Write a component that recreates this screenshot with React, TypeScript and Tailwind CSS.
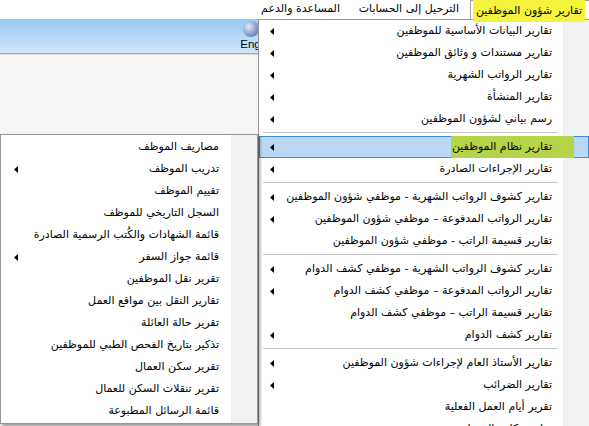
import type { ReactNode } from "react";

type Entry = { label: string; sub?: boolean } | "sep";

const MAIN_MENU: Entry[] = [
  { label: "تقارير البيانات الأساسية للموظفين", sub: true },
  { label: "تقارير مستندات و وثائق الموظفين", sub: true },
  { label: "تقارير الرواتب الشهرية", sub: true },
  { label: "تقارير المنشأة", sub: true },
  { label: "رسم بياني لشؤون الموظفين", sub: true },
  "sep",
  { label: "تقارير نظام الموظفين", sub: true },
  { label: "تقارير الإجراءات الصادرة", sub: true },
  "sep",
  { label: "تقارير كشوف الرواتب الشهرية - موظفي شؤون الموظفين", sub: true },
  { label: "تقارير الرواتب المدفوعة – موظفي شؤون الموظفين", sub: true },
  { label: "تقارير قسيمة الراتب - موظفي شؤون الموظفين" },
  "sep",
  { label: "تقارير كشوف الرواتب الشهرية - موظفي كشف الدوام", sub: true },
  { label: "تقارير الرواتب المدفوعة – موظفي كشف الدوام", sub: true },
  { label: "تقارير قسيمة الراتب – موظفي كشف الدوام" },
  { label: "تقارير كشف الدوام", sub: true },
  "sep",
  { label: "تقارير الأستاذ العام لإجراءات شؤون الموظفين", sub: true },
  { label: "تقارير الضرائب", sub: true },
  { label: "تقرير أيام العمل الفعلية" },
  { label: "تقارير تكلفة الموظفين", sub: true },
];

const SUB_MENU: Entry[] = [
  { label: "مصاريف الموظف" },
  { label: "تدريب الموظف", sub: true },
  { label: "تقييم الموظف" },
  { label: "السجل التاريخي للموظف" },
  { label: "قائمة الشهادات والكُتب الرسمية الصادرة" },
  { label: "قائمة جواز السفر", sub: true },
  { label: "تقرير نقل الموظفين" },
  { label: "تقارير النقل بين مواقع العمل" },
  { label: "تقرير حالة العائلة" },
  { label: "تذكير بتاريخ الفحص الطبي للموظفين" },
  { label: "تقرير سكن العمال" },
  { label: "تقرير تنقلات السكن للعمال" },
  { label: "قائمة الرسائل المطبوعة" },
];

const ACTIVE = "تقارير نظام الموظفين";

function Arrow() {
  return (
    <svg width="4" height="7" viewBox="0 0 4 7" className="shrink-0">
      <polygon points="4,0 4,7 0,3.5" fill="#000" />
    </svg>
  );
}

function MenuRow({ entry, textPad, arrowPad }: { entry: Entry; textPad: string; arrowPad: string }) {
  if (entry === "sep") {
    return (
      <div className="h-[6px] pt-[2px] pl-[4px] pr-[31px]">
        <div className="h-px bg-[#c5c5c5]" />
      </div>
    );
  }
  const active = entry.label === ACTIVE;
  return (
    <div
      className={
        "relative flex h-[22px] items-center justify-between border " +
        textPad +
        " " +
        arrowPad +
        (active ? " border-[#3d8ddb] bg-[#b9d8f4]" : " border-transparent")
      }
    >
      {active && (
        <div className="absolute right-[14px] top-[-1px] h-[22px] w-[123px] bg-[#b6d44a]" />
      )}
      <span className="relative whitespace-nowrap">{entry.label}</span>
      {entry.sub ? <Arrow /> : <span />}
    </div>
  );
}

function Menu({ entries, className, textPad, arrowPad, children }: {
  entries: Entry[];
  className: string;
  textPad: string;
  arrowPad: string;
  children?: ReactNode;
}) {
  return (
    <div dir="rtl" className={"absolute bg-white text-[11px] text-black " + className}>
      <div className="absolute right-0 top-0 bottom-0 w-[26px] bg-[#f1f1f1]" />
      <div className="relative">
        {entries.map((e, i) => (
          <MenuRow key={i} entry={e} textPad={textPad} arrowPad={arrowPad} />
        ))}
      </div>
      {children}
    </div>
  );
}

export default function App() {
  return (
    <div className="relative h-[426px] w-[589px] overflow-hidden bg-[#f5f5f5] font-['DejaVu_Sans',sans-serif]">
      {/* menu bar */}
      <div dir="rtl" className="flex h-[19px] items-center bg-white text-[11px] text-black">
        <div className="h-[19px] w-[119px] border-l border-t border-[#a0a0a0]" />
        <div className="w-[120px] pr-[11px] whitespace-nowrap">الترحيل إلى الحسابات</div>
        <div className="w-[100px] pr-[10px] whitespace-nowrap">المساعدة والدعم</div>
      </div>

      {/* toolbar */}
      <div className="flex h-[34px] items-start justify-end bg-gradient-to-b from-[#93c9f1] to-[#d2e7f9] pr-[311px]">
        <div className="flex flex-col items-start pt-[2px]">
          <div className="ml-[3px] h-[16px] w-[16px] rounded-full bg-[radial-gradient(circle_at_35%_35%,#e3ebf7,#7d93c6_60%,#4a5a8a)]" />
          <span className="font-['Liberation_Sans',sans-serif] text-[11.5px] leading-[14px] text-black">English</span>
        </div>
      </div>
      <div className="h-px bg-[#a9a9a9]" />
      <div className="h-px bg-[#dedede]" />

      {/* open top-level menu */}
      <Menu
        entries={MAIN_MENU}
        className="left-[258px] top-[19px] w-[331px] h-[410px] border-l border-t border-[#979797]"
        textPad="pr-[36px]"
        arrowPad="pl-[10px]"
      />

      {/* yellow marker on the open menu title */}
      <div className="absolute left-[473px] top-0 flex h-[22px] w-[112px] items-start justify-center bg-[#f4f43c] pt-[3px] text-[11px] text-black" dir="rtl">
        <span className="whitespace-nowrap">تقارير شؤون الموظفين</span>
      </div>

      {/* cascaded submenu */}
      <Menu
        entries={SUB_MENU}
        className="left-0 top-[134px] w-[258px] border border-[#979797] py-px shadow-[2px_2px_3px_rgba(0,0,0,0.4)]"
        textPad="pr-[37px]"
        arrowPad="pl-[12px]"
      />
    </div>
  );
}
